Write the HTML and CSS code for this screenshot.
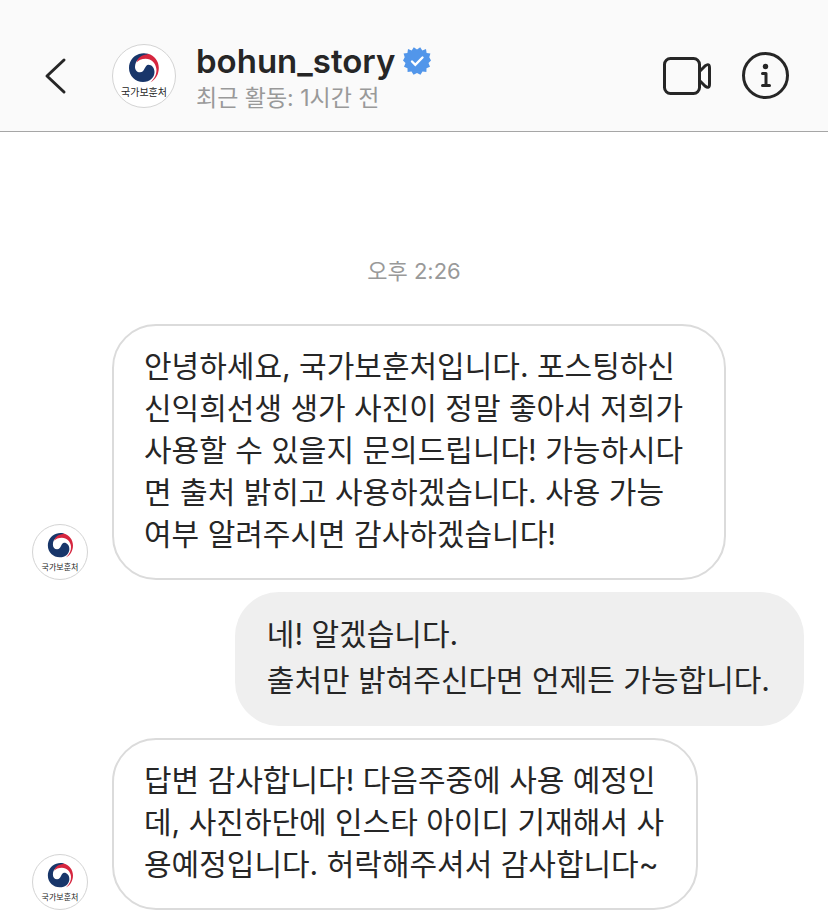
FILE: index.html
```html
<!DOCTYPE html>
<html lang="ko">
<head>
  <meta charset="UTF-8">
  <meta name="viewport" content="width=device-width, initial-scale=1">
  <title>bohun_story</title>
  <link rel="stylesheet" href="styles.css">
</head>
<body>
  <!-- emblem shared by every avatar -->
  <svg class="defs" width="0" height="0" aria-hidden="true">
    <symbol id="emblem" viewBox="0 0 32 32">
      <path fill="#18366a" d="M20 1.700C17 0.900 14 0.900 11 2C5 4 1 9.500 1 16C1 24 7.500 30 15 30C22 30 26.500 25.500 26.500 20C26.500 15.500 23.500 12.700 20.500 12.700C16.500 12.800 17 20.300 12 20.300C9 20.300 7 18 7 15C7 8 13 3.500 20 4Z"/>
      <path fill="#d6263f" d="M8.500 10.500C9.500 6 13.500 3 19 2.500L20 1.700C26.500 3.500 30.800 9 30.800 16C30.800 22.500 27.500 27.500 22.500 30.300C27 26 28.800 22 28.400 17C27.800 11 23.500 6.700 17.700 6.700C13.500 6.700 10.500 8 8.500 10.500Z"/>
    </symbol>
  </svg>

  <header class="topbar">
    <button class="icon-btn back" type="button" aria-label="뒤로">
      <svg width="24" height="38" viewBox="0 0 24 38"><path d="M20 3L3 19L20 35"/></svg>
    </button>
    <div class="avatar avatar-lg">
      <svg class="emblem"><use href="#emblem"/></svg>
      <span>국가보훈처</span>
    </div>
    <div class="user">
      <h1>bohun_story
        <svg class="badge" width="28" height="28" viewBox="0 0 28 28">
          <path fill="#5296ea" d="M14 2.600L17.200 0.200L19.300 3.500L23 2L23.600 5.900L27.400 6.400L26.300 10.200L28 13.500L25.500 16L27 19.700L23.500 21.200L23.400 25L19.500 24.500L17.500 27.800L14 26L10.500 27.800L8.500 24.500L4.600 25L4.500 21.200L1 19.700L2.500 16L0 13.500L1.700 10.200L0.600 6.400L4.400 5.900L5 2L8.700 3.500L10.800 0.200Z"/>
          <path fill="none" stroke="#fff" stroke-width="2.400" stroke-linecap="round" d="M9 14.500L12.300 17.800L19.500 10.500"/>
        </svg>
      </h1>
      <p>최근 활동: 1시간 전</p>
    </div>
    <button class="icon-btn video" type="button" aria-label="영상 통화">
      <svg width="50" height="40" viewBox="0 0 50 40">
        <rect x="2.500" y="2.500" width="35" height="35" rx="6"/>
        <path d="M38 15L43 10Q47.500 6.500 47.500 12V28Q47.500 33.500 43 30L38 25"/>
      </svg>
    </button>
    <button class="icon-btn info" type="button" aria-label="정보">
      <svg width="48" height="48" viewBox="0 0 48 48">
        <circle cx="23.500" cy="23.500" r="22"/>
        <circle class="dot" cx="23.500" cy="14.500" r="2.700"/>
        <path d="M20.500 21.500H24V33.500M20.500 33.500H27.500"/>
      </svg>
    </button>
  </header>

  <main class="chat">
    <time class="time">오후 2:26</time>

    <div class="row">
      <div class="avatar">
        <svg class="emblem"><use href="#emblem"/></svg>
        <span>국가보훈처</span>
      </div>
      <p class="bubble long">안녕하세요, 국가보훈처입니다. 포스팅하신<br>
        신익희선생 생가 사진이 정말 좋아서 저희가<br>
        사용할 수 있을지 문의드립니다! 가능하시다<br>
        면 출처 밝히고 사용하겠습니다. 사용 가능<br>
        여부 알려주시면 감사하겠습니다!</p>
    </div>

    <div class="row mine">
      <p class="bubble">네! 알겠습니다.<br>
        출처만 밝혀주신다면 언제든 가능합니다.</p>
    </div>

    <div class="row">
      <div class="avatar">
        <svg class="emblem"><use href="#emblem"/></svg>
        <span>국가보훈처</span>
      </div>
      <p class="bubble">답변 감사합니다! 다음주중에 사용 예정인<br>
        데, 사진하단에 인스타 아이디 기재해서 사<br>
        용예정입니다. 허락해주셔서 감사합니다~</p>
    </div>
  </main>
</body>
</html>
```
FILE: styles.css
```css
* {
  box-sizing: border-box;
}
body {
  margin: 0;
  background-color: #fff;
  font-family: Inter, "Noto Sans CJK KR", sans-serif;
  color: #262626;
}
h1, p {
  margin: 0;
}
.defs {
  position: absolute;
}

/* header */
.topbar {
  display: flex;
  align-items: center;
  padding: 39px 38px 18px 44px;
  background-color: #fafafa;
  border-bottom: 1px solid #a6a6a6;
}
.icon-btn {
  padding: 0;
  border: none;
  background: none;
  cursor: pointer;
}
.icon-btn svg {
  display: block;
  fill: none;
  stroke: #262626;
  stroke-width: 3;
  stroke-linecap: round;
  stroke-linejoin: round;
}
.icon-btn .dot {
  fill: #262626;
  stroke: none;
}
.back {
  margin-right: 44px;
}
.video {
  margin-right: 30px;
}
.user {
  flex: 1;
  margin-left: 20px;
}
.user h1 {
  display: flex;
  align-items: center;
  gap: 8px;
  font-size: 33px;
  font-weight: 600;
  line-height: 44px;
}
.user p {
  font-size: 23px;
  line-height: 30px;
  color: #999;
}

/* round profile picture */
.avatar {
  display: flex;
  flex-direction: column;
  align-items: center;
  flex-shrink: 0;
  width: 56px;
  height: 56px;
  padding-top: 7px;
  border: 1px solid #d4d4d4;
  border-radius: 50%;
  background-color: #fff;
}
.avatar .emblem {
  width: 27px;
  height: 27px;
}
.avatar span {
  font-size: 8px;
  line-height: 16px;
  white-space: nowrap;
}
.avatar-lg {
  width: 64px;
  height: 64px;
}
.avatar-lg .emblem {
  width: 32px;
  height: 32px;
}
.avatar-lg span {
  font-size: 10px;
}

/* messages */
.chat {
  display: flex;
  flex-direction: column;
  gap: 12px;
  padding: 124px 24px 12px;
}
.time {
  margin-bottom: 26px;
  font-size: 22px;
  line-height: 30px;
  text-align: center;
  color: #999;
}
.row {
  display: flex;
  align-items: flex-end;
  gap: 24px;
  margin-left: 8px;
}
.bubble {
  padding: 19px 32px 23px 30px;
  border: 2px solid #dbdbdb;
  border-radius: 44px;
  font-size: 30px;
  line-height: 42px;
}
.bubble.long {
  padding-right: 41px;
}
.mine {
  justify-content: flex-end;
}
.mine .bubble {
  padding: 19px 34px 23px 32px;
  border: none;
  background-color: #efefef;
  line-height: 46px;
}
```
